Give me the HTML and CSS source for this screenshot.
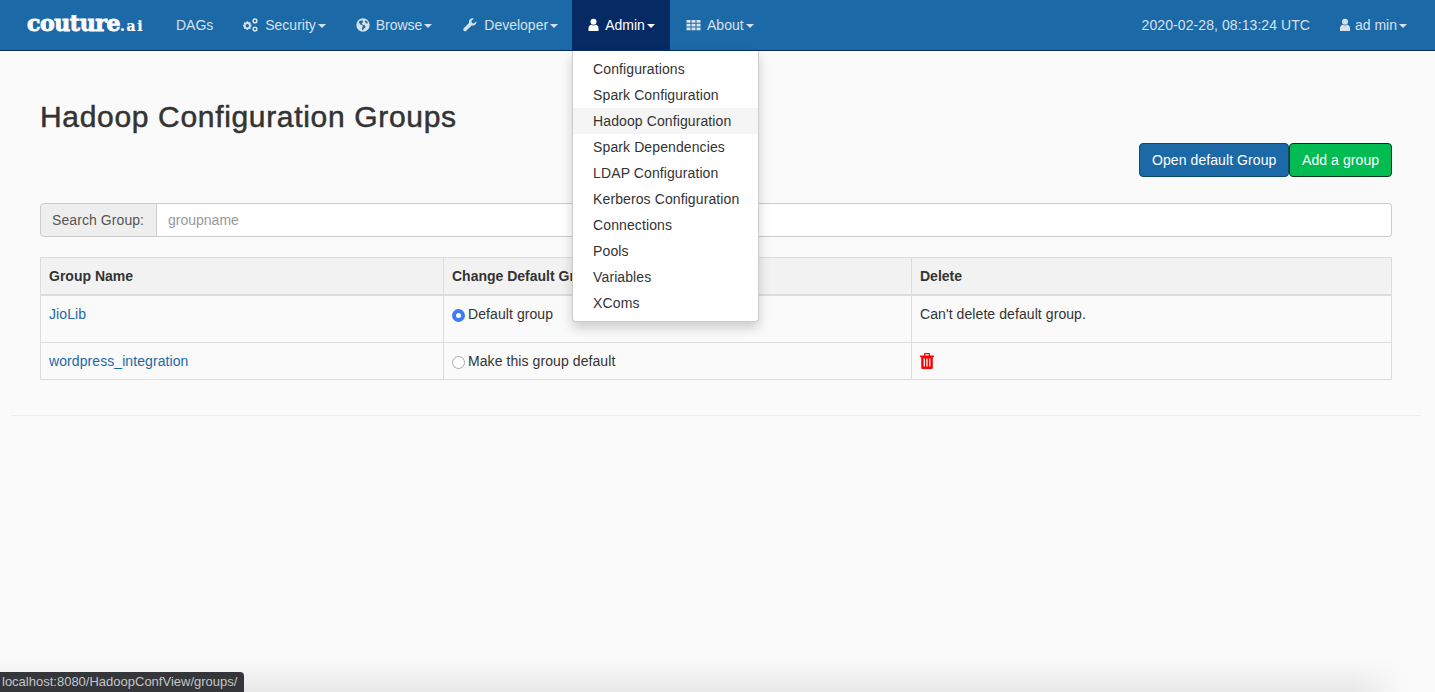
FILE: index.html
```html
<!DOCTYPE html>
<html lang="en">

<head>
  <meta charset="UTF-8">
  <title>Hadoop Configuration Groups</title>
  <link rel="stylesheet" href="styles.css">
</head>

<body>
  <header class="navbar">
    <a class="brand" href="#">couture<span class="brand-ai">.ai</span></a>
    <ul class="nav">
      <li class="nav-item"><a href="#">DAGs</a></li>
      <li class="nav-item">
        <a href="#">
          <svg class="nav-icon icon-cogs" viewBox="1.500 0 16 14" fill="currentColor">
            <path fill-rule="evenodd" d="M5 3.200h1.600l.4 1.300 1.200-.6 1.200 1.200-.6 1.200 1.300.4v1.700l-1.300.4.6 1.200-1.200 1.200-1.200-.6-.4 1.300H5l-.4-1.300-1.200.6-1.200-1.200.6-1.200L1.500 8.600V6.900l1.300-.4-.6-1.200 1.200-1.200 1.200.6zM5.800 6a1.700 1.700 0 1 0 0 3.400 1.700 1.700 0 0 0 0-3.400z" />
            <path fill-rule="evenodd" d="M13.500.3a2.600 2.600 0 1 1 0 5.200 2.600 2.600 0 0 1 0-5.200zm0 1.500a1.100 1.100 0 1 0 0 2.200 1.100 1.100 0 0 0 0-2.200zM13.500 8.500a2.600 2.600 0 1 1 0 5.200 2.600 2.600 0 0 1 0-5.200zm0 1.500a1.100 1.100 0 1 0 0 2.200 1.100 1.100 0 0 0 0-2.200z" />
          </svg>
          Security<span class="caret"></span>
        </a>
      </li>
      <li class="nav-item">
        <a href="#">
          <svg class="nav-icon" viewBox="0.500 0.500 13 13" fill="currentColor">
            <path fill-rule="evenodd" d="M7 .8a6.200 6.200 0 1 1 0 12.400A6.200 6.200 0 0 1 7 .8zM3 3.800l1.200 2.400 2.300 1 .3 1.700-1 1.200.8 2 1.700-2 1.200-1.400-.9-1.500-2.200-.6-.7-1 1-.9.3-1.700-1-.4z" />
            <path d="M9 2.500l2 1.200.5 2-1.500-.3-1.200-1.200z" fill="#1c69a8" />
          </svg>
          Browse<span class="caret"></span>
        </a>
      </li>
      <li class="nav-item">
        <a href="#">
          <svg class="nav-icon icon-wrench" viewBox="0 0 14 14" fill="currentColor">
            <path d="M13.400 3.200l-2.500 2.300-2-.5-.5-2L10.800.6C9.300 0 7.700.4 6.800 1.500 6 2.400 5.800 3.700 6.100 4.800L.8 10.200c-.7.700-.7 1.800 0 2.500.7.700 1.800.7 2.500 0l5.400-5.300c1.100.3 2.400.1 3.300-.7 1.200-1 1.600-2.600 1.400-3.500z" />
          </svg>
          Developer<span class="caret"></span>
        </a>
      </li>
      <li class="nav-item active">
        <a href="#">
          <svg class="nav-icon icon-user" viewBox="0 0 12 14" fill="currentColor">
            <circle cx="6" cy="3.800" r="3" />
            <path d="M1 13v-2.800C1 8 2.500 7 4 6.800c1.200.8 2.800.8 4 0 1.500.2 3 1.200 3 3.400V13z" />
          </svg>
          Admin<span class="caret"></span>
        </a>
        <ul class="dropdown">
          <li><a href="#">Configurations</a></li>
          <li><a href="#">Spark Configuration</a></li>
          <li class="hover"><a href="#">Hadoop Configuration</a></li>
          <li><a href="#">Spark Dependencies</a></li>
          <li><a href="#">LDAP Configuration</a></li>
          <li><a href="#">Kerberos Configuration</a></li>
          <li><a href="#">Connections</a></li>
          <li><a href="#">Pools</a></li>
          <li><a href="#">Variables</a></li>
          <li><a href="#">XComs</a></li>
        </ul>
      </li>
      <li class="nav-item">
        <a href="#">
          <svg class="nav-icon icon-th" viewBox="0 0 14 14" fill="currentColor">
            <path d="M0 2h4v2.800H0zM5 2h4v2.800H5zM10 2h4v2.800h-4zM0 5.700h4v2.800H0zM5 5.700h4v2.800H5zM10 5.700h4v2.800h-4zM0 9.400h4v2.800H0zM5 9.400h4v2.800H5zM10 9.400h4v2.800h-4z" />
          </svg>
          About<span class="caret"></span>
        </a>
      </li>
    </ul>
    <div class="nav-right">
      <span class="clock">2020-02-28, 08:13:24 UTC</span>
      <a class="user" href="#">
        <svg class="nav-icon icon-user" viewBox="0 0 12 14" fill="currentColor">
          <circle cx="6" cy="3.800" r="3" />
          <path d="M1 13v-2.800C1 8 2.500 7 4 6.800c1.200.8 2.800.8 4 0 1.500.2 3 1.200 3 3.400V13z" />
        </svg>
        ad min<span class="caret"></span>
      </a>
    </div>
  </header>

  <main class="container">
    <div class="content">
      <h2 class="title">Hadoop Configuration Groups</h2>

      <div class="actions">
        <a class="btn btn-blue" href="#">Open default Group</a>
        <a class="btn btn-green" href="#">Add a group</a>
      </div>

      <div class="input-group">
        <span class="addon">Search Group:</span>
        <input class="search" type="text" placeholder="groupname">
      </div>

      <table class="groups">
        <thead>
          <tr>
            <th class="col-name">Group Name</th>
            <th class="col-default">Change Default Group</th>
            <th>Delete</th>
          </tr>
        </thead>
        <tbody>
          <tr class="tall">
            <td><a href="#">JioLib</a></td>
            <td><label class="radio"><span class="dot checked"></span>Default group</label></td>
            <td>Can't delete default group.</td>
          </tr>
          <tr>
            <td><a href="#">wordpress_integration</a></td>
            <td><label class="radio"><span class="dot"></span>Make this group default</label></td>
            <td>
              <svg class="trash" viewBox="0 0 14 16" fill="currentColor">
                <path fill-rule="evenodd" d="M5 0h4a1 1 0 0 1 1 1v1.500h3.500a.5.500 0 0 1 .5.500v1h-1.200v10.200c0 1-.7 1.800-1.500 1.800H2.700c-.8 0-1.500-.8-1.500-1.800V4H0V3a.5.500 0 0 1 .5-.5H4V1a1 1 0 0 1 1-1zm.2 1.300v1.200h3.600V1.300zM3.600 5.500v8h1.300v-8zm2.750 0v8h1.300v-8zm2.750 0v8h1.300v-8z" />
              </svg>
            </td>
          </tr>
        </tbody>
      </table>
    </div>
    <hr class="rule">
  </main>

  <div class="bottom-shade"></div>
  <div class="status-bubble">localhost:8080/HadoopConfView/groups/</div>
</body>

</html>
```

FILE: styles.css
```css
* {
  box-sizing: border-box;
}

body {
  margin: 0;
  height: 692px;
  overflow: hidden;
  background: #fafafa;
  color: #333;
  font-family: "Liberation Sans", Arial, sans-serif;
  font-size: 14px;
  line-height: 20px;
  letter-spacing: 0.08px;
}

a {
  text-decoration: none;
}

/* navbar */
.navbar {
  display: flex;
  height: 51px;
  padding-left: 27px;
  background: #1c69a8;
  border-bottom: 1px solid #0a2d62;
  color: #d7e1ea;
}

.brand {
  width: 134px;
  color: #fff;
  font-family: "DejaVu Serif", serif;
  font-weight: 700;
  font-size: 22px;
  line-height: 47px;
  letter-spacing: -0.4px;
  -webkit-text-stroke: 0.9px #fff;
}

.brand-ai {
  font-size: 14px;
  letter-spacing: 1.6px;
  -webkit-text-stroke: 0.2px #fff;
}

.nav {
  display: flex;
  margin: 0;
  padding: 0;
  list-style: none;
  letter-spacing: 0;
}

.nav-item {
  position: relative;
}

.nav-item > a {
  display: block;
  height: 50px;
  padding: 15px;
  color: inherit;
  white-space: nowrap;
}

.nav-item.active {
  margin-left: -1px;
}

.nav-item.active > a {
  background: #062a63;
  color: #fff;
}

.nav-icon {
  width: 14px;
  height: 14px;
  margin-right: 2px;
  vertical-align: -2px;
}

.icon-cogs {
  width: 16px;
}

.icon-wrench {
  width: 16px;
}

.icon-user {
  width: 12px;
}

.nav-item.active .icon-user {
  width: 13px;
}

.icon-th {
  width: 17px;
}

.caret {
  display: inline-block;
  margin-left: 2px;
  vertical-align: middle;
  border-top: 4px solid;
  border-left: 4px solid transparent;
  border-right: 4px solid transparent;
}

.nav-right {
  display: flex;
  margin-left: auto;
  padding-right: 28px;
  line-height: 50px;
}

.clock {
  margin-right: 29px;
}

.user {
  color: inherit;
  letter-spacing: 0;
}

.user .nav-icon {
  margin-right: 0;
}

/* admin menu */
.dropdown {
  position: absolute;
  top: 51px;
  left: 0;
  width: 187px;
  margin: 0;
  padding: 5px 0;
  list-style: none;
  background: #fff;
  border: 1px solid #ccc;
  border-top: 0;
  border-radius: 0 0 4px 4px;
  box-shadow: 0 6px 12px rgba(0, 0, 0, 0.18);
  letter-spacing: 0.1px;
  z-index: 10;
}

.dropdown a {
  display: block;
  height: 26px;
  padding: 3px 20px;
  color: #333;
  white-space: nowrap;
}

.dropdown .hover a {
  background: #f5f5f5;
}

/* page body */
.container {
  padding: 0 14px 0 11px;
}

.content {
  padding: 0 29px;
}

.title {
  margin: 0;
  padding-top: 49px;
  height: 92px;
  font-size: 30px;
  line-height: 33px;
  font-weight: 400;
  letter-spacing: 0.67px;
  -webkit-text-stroke: 0.5px #333;
}

.actions {
  display: flex;
  justify-content: flex-end;
  height: 60px;
}

.btn {
  height: 34px;
  padding: 6px 12px;
  border: 1px solid;
  border-radius: 4px;
  color: #fff;
  white-space: nowrap;
}

.btn-blue {
  width: 150px;
  background: #1c69a8;
  border-color: #0d4a6a;
}

.btn-green {
  width: 103px;
  background: #00bc52;
  border-color: #04361c;
}

.input-group {
  display: flex;
  height: 34px;
  margin-bottom: 20px;
}

.addon {
  width: 117px;
  padding: 6px 0 6px 11px;
  background: #eee;
  border: 1px solid #ccc;
  border-radius: 4px 0 0 4px;
  color: #555;
  white-space: nowrap;
}

.search {
  flex: 1;
  padding: 6px 11px;
  border: 1px solid #ccc;
  border-left: 0;
  border-radius: 0 4px 4px 0;
  background: #fff;
  color: #555;
  font: inherit;
}

.search::placeholder {
  color: #999;
}

.groups {
  width: 100%;
  border-collapse: collapse;
  table-layout: fixed;
}

.groups th,
.groups td {
  padding: 8px;
  border: 1px solid #ddd;
  text-align: left;
  vertical-align: top;
}

.groups th {
  background: #f2f2f2;
  border-bottom-width: 2px;
  letter-spacing: 0;
}

.col-name {
  width: 403px;
}

.col-default {
  width: 468px;
}

.tall td {
  padding-bottom: 18px;
}

.groups a {
  color: #1c69a8;
}

.radio {
  display: flex;
}

.dot {
  width: 13px;
  height: 13px;
  margin: 5px 3px 0 0;
  border: 1px solid #aaa;
  border-radius: 50%;
  background: #fff;
}

.dot.checked {
  border: 4.5px solid #3b7bf5;
}

.trash {
  display: block;
  width: 14px;
  height: 16px;
  margin-top: 2px;
  color: #f00;
}

.rule {
  margin: 35px 0 0;
  border: 0;
  border-top: 1px solid #eee;
}

/* browser chrome along the bottom */
.bottom-shade {
  position: fixed;
  left: 0;
  right: 30px;
  bottom: 0;
  height: 34px;
  background: linear-gradient(to bottom, rgba(0, 0, 0, 0), rgba(0, 0, 0, 0.07));
  -webkit-mask-image: linear-gradient(to left, transparent, #000 50px);
  mask-image: linear-gradient(to left, transparent, #000 50px);
}

.status-bubble {
  position: fixed;
  left: 0;
  bottom: 0;
  width: 244px;
  height: 20px;
  padding: 0 2px;
  background: #35363a;
  border-top-right-radius: 4px;
  color: #c4c5c7;
  font-size: 13px;
  line-height: 20px;
  letter-spacing: 0;
  white-space: nowrap;
}
```
